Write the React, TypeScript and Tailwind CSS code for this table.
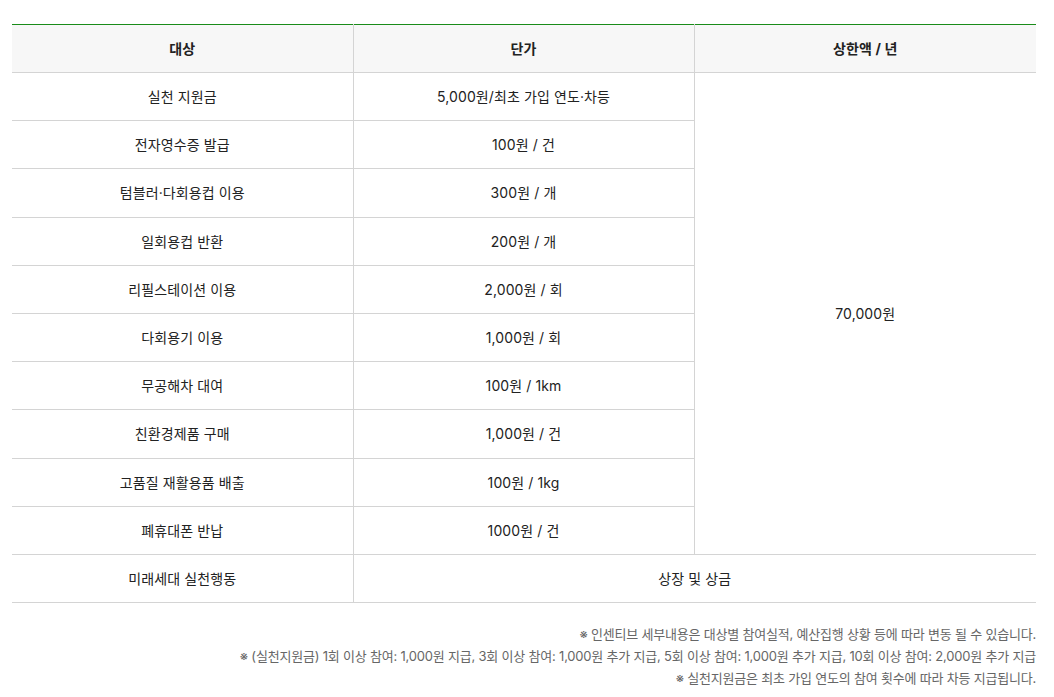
import React from "react";

const rows: [string, string][] = [
  ["실천 지원금", "5,000원/최초 가입 연도·차등"],
  ["전자영수증 발급", "100원 / 건"],
  ["텀블러·다회용컵 이용", "300원 / 개"],
  ["일회용컵 반환", "200원 / 개"],
  ["리필스테이션 이용", "2,000원 / 회"],
  ["다회용기 이용", "1,000원 / 회"],
  ["무공해차 대여", "100원 / 1km"],
  ["친환경제품 구매", "1,000원 / 건"],
  ["고품질 재활용품 배출", "100원 / 1kg"],
  ["폐휴대폰 반납", "1000원 / 건"],
];

const font = { fontFamily: "Inter, 'Noto Sans CJK KR', 'Noto Sans', sans-serif" };

export default function App() {
  return (
    <div className="bg-white w-[1054px] min-h-[697px] pt-[24px] px-[12px] text-[#222]" style={font}>
      <table className="w-[1024px] border-collapse table-fixed text-[14px] tracking-[0.1px]">
        <colgroup>
          <col className="w-[341px]" />
          <col className="w-[341px]" />
          <col className="w-[342px]" />
        </colgroup>
        <thead>
          <tr className="bg-[#f7f7f7] border-t border-t-[#1a8c1a] border-b border-b-[#d4d4d4]">
            <th className="h-[48px] font-bold text-[#222] border-r border-[#d4d4d4]">대상</th>
            <th className="h-[48px] font-bold text-[#222] border-r border-[#d4d4d4]">단가</th>
            <th className="h-[48px] font-bold text-[#222]">상한액 / 년</th>
          </tr>
        </thead>
        <tbody>
          {rows.map(([a, b], i) => (
            <tr key={i} className="border-b border-[#d4d4d4]">
              <td className="h-[48.2px] text-center border-r border-[#d4d4d4] p-0">{a}</td>
              <td className="h-[48.2px] text-center border-r border-[#d4d4d4] p-0">{b}</td>
              {i === 0 && (
                <td rowSpan={10} className="text-center p-0">
                  70,000원
                </td>
              )}
            </tr>
          ))}
          <tr className="border-b border-[#d4d4d4]">
            <td className="h-[48px] text-center border-r border-[#d4d4d4] p-0">미래세대 실천행동</td>
            <td colSpan={2} className="h-[48px] text-center p-0">상장 및 상금</td>
          </tr>
        </tbody>
      </table>
      <div className="w-[1024px] mt-[20px] text-right text-[13px] leading-[22px] text-[#666] tracking-[-0.2px]">
        <p>※ 인센티브 세부내용은 대상별 참여실적, 예산집행 상황 등에 따라 변동 될 수 있습니다.</p>
        <p>※ (실천지원금) 1회 이상 참여: 1,000원 지급, 3회 이상 참여: 1,000원 추가 지급, 5회 이상 참여: 1,000원 추가 지급, 10회 이상 참여: 2,000원 추가 지급</p>
        <p>※ 실천지원금은 최초 가입 연도의 참여 횟수에 따라 차등 지급됩니다.</p>
      </div>
    </div>
  );
}
